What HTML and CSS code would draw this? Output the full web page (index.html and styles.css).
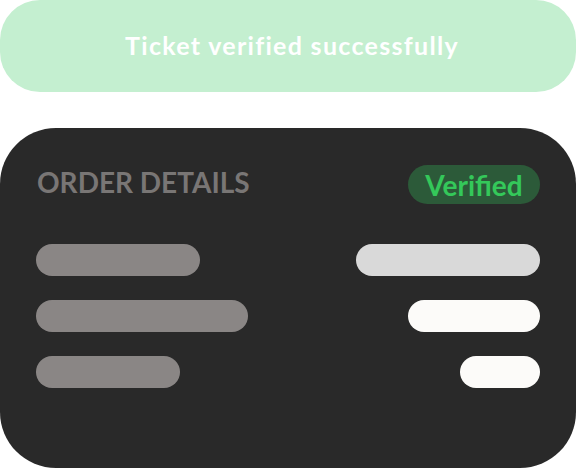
FILE: index.html
```html
<!DOCTYPE html>
<html>
<head>
<meta charset="utf-8">
<link rel="stylesheet" href="styles.css">
</head>
<body>
<div class="page">
  <div class="banner">Ticket verified successfully</div>
  <div class="card">
    <div class="card-head">
      <div class="title">ORDER DETAILS</div>
      <div class="badge">Verified</div>
    </div>
    <div class="rows">
      <div class="row"><div class="bar left" style="width:164px"></div><div class="bar right r1" style="width:184px"></div></div>
      <div class="row"><div class="bar left" style="width:212px"></div><div class="bar right r2" style="width:132px"></div></div>
      <div class="row"><div class="bar left" style="width:144px"></div><div class="bar right r2" style="width:80px"></div></div>
    </div>
  </div>
</div>
</body>
</html>
```
FILE: styles.css
```css
html, body { margin: 0; padding: 0; background: #ffffff; }
.page {
  width: 576px;
  height: 468px;
  display: flex;
  flex-direction: column;
  font-family: Lato, "Noto Sans", sans-serif;
  overflow: hidden;
}
.banner {
  height: 92px;
  border-radius: 40px;
  background: #c4efd0;
  color: #ffffff;
  font-weight: 700;
  font-size: 25px;
  letter-spacing: 1.3px;
  display: flex;
  align-items: center;
  justify-content: center;
  flex-shrink: 0;
  padding: 0 0 2px 8px;
  box-sizing: border-box;
}
.card {
  margin-top: 36px;
  height: 340px;
  background: #292929;
  border-radius: 56px;
  padding: 37px 36px 0 37px;
  box-sizing: border-box;
  display: flex;
  flex-direction: column;
}
.card-head {
  display: flex;
  justify-content: space-between;
  align-items: center;
  height: 39px;
}
.title {
  color: #797675;
  font-weight: 700;
  font-size: 28px;
  line-height: 1;
  margin-bottom: 6px;
}
.badge {
  height: 39px;
  width: 132px;
  border-radius: 20px;
  background: #2c5a39;
  color: #34c85a;
  font-weight: 700;
  font-size: 28px;
  display: flex;
  align-items: center;
  justify-content: center;
}
.rows {
  margin-top: 40px;
  margin-left: -1px;
  display: flex;
  flex-direction: column;
  gap: 24px;
}
.row {
  display: flex;
  justify-content: space-between;
}
.bar {
  height: 32px;
  border-radius: 16px;
}
.left { background: #8a8685; }
.r1 { background: #d9d9d9; }
.r2 { background: #fcfbf9; }
```
